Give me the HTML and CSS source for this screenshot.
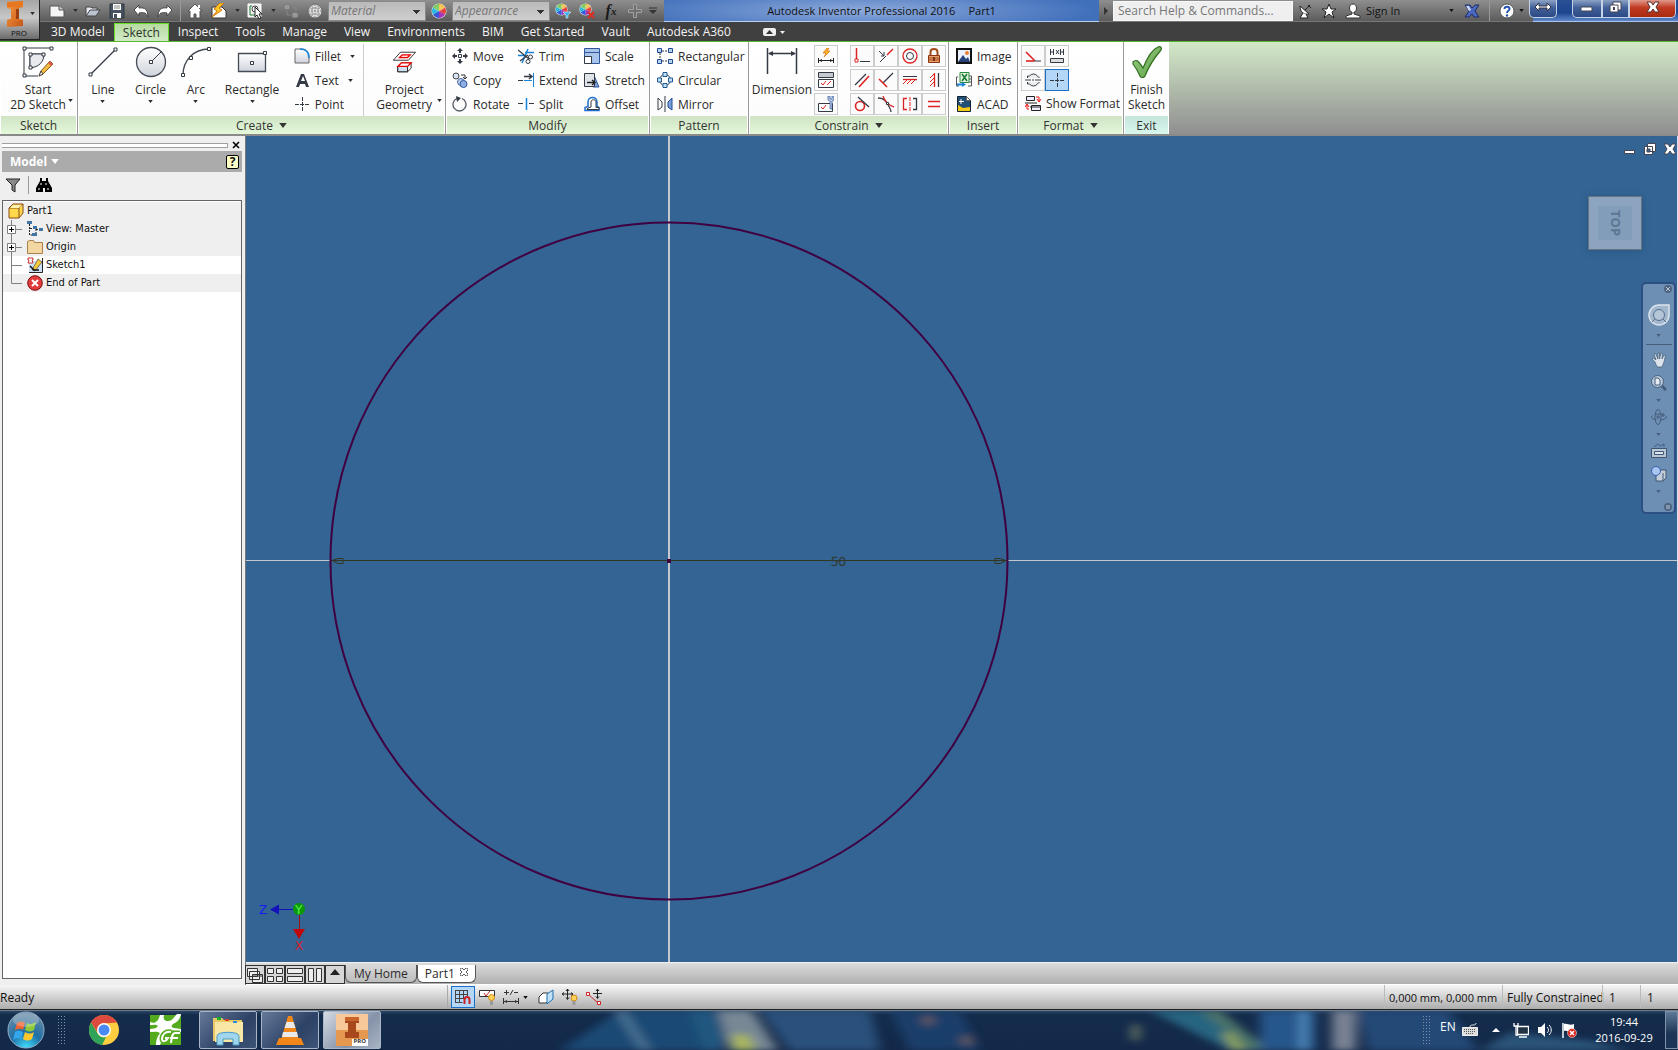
FILE: index.html
```html
<!DOCTYPE html>
<html lang="en">
<head>
<meta charset="utf-8">
<title>Autodesk Inventor Professional 2016 - Part1</title>
<link rel="stylesheet" href="styles.css">
</head>
<body>
<svg class="defs" aria-hidden="true">
  <defs>
    <linearGradient id="steel" x1="0" y1="0" x2="0" y2="1"><stop offset="0" stop-color="#fff"/><stop offset="1" stop-color="#cfd3dc"/></linearGradient>
    <linearGradient id="orange" x1="0" y1="0" x2="1" y2="1"><stop offset="0" stop-color="#f79a3c"/><stop offset="1" stop-color="#c4561a"/></linearGradient>
    <linearGradient id="green" x1="0" y1="0" x2="1" y2="1"><stop offset="0" stop-color="#9ccf86"/><stop offset="1" stop-color="#5c9e45"/></linearGradient>
    <radialGradient id="orb" cx=".5" cy="1" r="1"><stop offset="0" stop-color="#3fe0ff"/><stop offset=".45" stop-color="#1f6fa5"/><stop offset="1" stop-color="#6f8ba5"/></radialGradient>
    <symbol id="wheel" viewBox="0 0 16 16">
      <circle cx="8" cy="8" r="7.500" fill="#eee"/>
      <path d="M8 8V1A7 7 0 0 1 14 4.500z" fill="#f0b429"/><path d="M8 8l6-3.500A7 7 0 0 1 14 11.500z" fill="#e8413a"/>
      <path d="M8 8l6 3.500A7 7 0 0 1 8 15z" fill="#a535b8"/><path d="M8 8v7a7 7 0 0 1-6-3.500z" fill="#3458d8"/>
      <path d="M8 8l-6 3.500A7 7 0 0 1 2 4.500z" fill="#2fb6e0"/><path d="M8 8L2 4.500A7 7 0 0 1 8 1z" fill="#5cbf3a"/>
      <ellipse cx="8" cy="5" rx="5" ry="3" fill="#fff" opacity=".25"/>
    </symbol>
    <symbol id="caret" viewBox="0 0 6 4"><path d="M0 0h6L3 4z" fill="currentColor"/></symbol>
  </defs>
</svg>

<header class="top">
  <button class="app" aria-label="Application menu">
    <svg class="app-logo" viewBox="0 0 18 26"><path d="M1 1l16-1v6l-4 1v11l4 1v6L1 26v-7l4-1V8L1 7z" fill="url(#orange)"/><path d="M1 1l16-1v6H1zM1 19l4-1h8l4 1H1z" fill="#e87722"/><path d="M10 8h3v10h-3z" fill="#9c3f10"/></svg>
    <svg class="caret"><use href="#caret"/></svg>
    <span class="app-pro">PRO</span>
  </button>
  <div class="titlebar">
    <div class="qat">
      <button class="q" aria-label="New"><svg class="i16" viewBox="0 0 16 16"><path d="M1 3h9l5 4v7H1z" fill="#f4f4f4" stroke="#555"/><path d="M10 3v4h5" fill="#ccc" stroke="#555"/></svg></button>
      <button class="q drop" aria-label="New options"><svg class="caret"><use href="#caret"/></svg></button>
      <button class="q" aria-label="Open"><svg class="i16" viewBox="0 0 16 16"><path d="M1 13V4h5l1 1h5v3" fill="#e8ecf1" stroke="#444"/><path d="M1 13l4-6h10l-4 6z" fill="#b9c4d0" stroke="#444"/></svg></button>
      <button class="q" aria-label="Save"><svg class="i16" viewBox="0 0 16 16"><path d="M1 1h14v14H1z" fill="#46525f" stroke="#2d3640"/><path d="M4 1h8v6H4zM4 10h8v5H4z" fill="#fff"/><path d="M5 3h6M5 5h6" stroke="#888"/><path d="M5 11h3v4H5z" fill="#46525f"/></svg></button>
      <button class="q" aria-label="Undo"><svg class="i16" viewBox="0 0 16 16"><path d="M1 7l5-5v3c6-1 9 2 9 9-1-4-4-5-9-4v3z" fill="#fff" stroke="#444"/></svg></button>
      <button class="q" aria-label="Redo"><svg class="i16" viewBox="0 0 16 16"><path d="M15 7l-5-5v3c-6-1-9 2-9 9 1-4 4-5 9-4v3z" fill="#fff" stroke="#444"/></svg></button>
      <span class="q-sep"></span>
      <button class="q" aria-label="Home"><svg class="i16" viewBox="0 0 16 16"><path d="M8 1l7 7h-2v7H9v-4H7v4H3V8H1z" fill="#fff" stroke="#555"/><path d="M12 2v3" stroke="#fff" stroke-width="2"/></svg></button>
      <button class="q" aria-label="Local update"><svg class="i16" viewBox="0 0 16 16"><path d="M1 4h10l4 4v7H1z" fill="#fff" stroke="#333"/><path d="M9 0L3 6l3 2-5 6 10-7-3-2 5-5z" fill="#ffc928" stroke="#d3740c"/></svg></button>
      <button class="q drop" aria-label="Update options"><svg class="caret"><use href="#caret"/></svg></button>
      <button class="q" aria-label="Select"><svg class="i16" viewBox="0 0 16 16"><path d="M1 1h13v13H1z" fill="#eee" stroke="#fff"/><path d="M3 3v9h6M3 3h2" fill="none" stroke="#1d7a2f"/><circle cx="8" cy="6" r="3" fill="#fff" stroke="#444"/><path d="M8 4l7 7h-3l2 4-2 1-2-4-2 2z" fill="#fff" stroke="#222"/></svg></button>
      <button class="q drop" aria-label="Select options"><svg class="caret"><use href="#caret"/></svg></button>
      <button class="q" aria-label="Return"><svg class="i16" viewBox="0 0 16 16"><path d="M1 2l3-1 3 1v4L4 7 1 6zM9 10l3-1 3 1v4l-3 1-3-1z" fill="#999" stroke="#777"/><path d="M4 8v4h4M10 5h3v3" fill="none" stroke="#888"/></svg></button>
      <button class="q" aria-label="Material browser"><svg class="i16" viewBox="0 0 16 16"><circle cx="8" cy="8" r="7" fill="#ddd" stroke="#666"/><path d="M2 5h12M1 8h14M2 11h12M5 2v12M8 1v14M11 2v12" stroke="#888" stroke-dasharray="2 1"/></svg></button>
      <select class="picker" aria-label="Material"><option>Material</option></select>
      <button class="q" aria-label="Appearance browser"><svg class="i16"><use href="#wheel"/></svg></button>
      <select class="picker" aria-label="Appearance"><option>Appearance</option></select>
      <button class="q" aria-label="Adjust appearance"><svg class="i16" viewBox="0 0 16 16"><use href="#wheel" width="13" height="13"/><path d="M8 9h8l-3 3v3h-2v-3z" fill="#35b3ec" stroke="#fff" stroke-width=".5"/></svg></button>
      <button class="q" aria-label="Clear appearance"><svg class="i16" viewBox="0 0 16 16"><use href="#wheel" width="13" height="13"/><path d="M9 9l6 6M15 9l-6 6" stroke="#e02b20" stroke-width="2"/></svg></button>
      <button class="q fx" aria-label="Parameters">f<sub>x</sub></button>
      <button class="q" aria-label="Add"><svg class="i16" viewBox="0 0 16 16"><path d="M6.500 1.500h3v5h5v3h-5v5h-3v-5h-5v-3h5z" fill="#6f6f6f" stroke="#a0a0a0"/></svg></button>
      <button class="q drop" aria-label="Customize"><svg class="i8" viewBox="0 0 8 8"><path d="M0 1h8" stroke="#333"/><path d="M0 3h8L4 7z" fill="#333"/></svg></button>
    </div>
    <div class="caption"><span>Autodesk Inventor Professional 2016</span><span>Part1</span></div>
    <div class="info">
      <button class="expand" aria-label="Toggle search"><svg viewBox="0 0 4 8"><path d="M0 0l4 4-4 4z" fill="#333"/></svg></button>
      <input class="search" type="text" aria-label="Search" placeholder="Search Help &amp; Commands...">
      <button class="q" aria-label="Communication center"><svg class="i16" viewBox="0 0 16 16"><path d="M3 3c0 6 4 9 9 8z" fill="#fff" stroke="#222"/><path d="M8 7l5-5M11 2l3 3M6 10l-3 5h8l-2-4" fill="#fff" stroke="#222"/></svg></button>
      <button class="q" aria-label="Favorites"><svg class="i16" viewBox="0 0 16 16"><path d="M8 1l2 5h5l-4 3 2 6-5-4-5 4 2-6-4-3h5z" fill="#fff" stroke="#222"/></svg></button>
      <button class="q sign"><svg class="i16" viewBox="0 0 16 16"><path d="M8 1c5 0 4 8 1 8v2l6 2v2H1v-2l6-2V9C4 9 3 1 8 1z" fill="#fff" stroke="#333"/></svg><span>Sign In</span><svg class="caret"><use href="#caret"/></svg></button>
      <button class="q" aria-label="Exchange apps"><svg class="i16" viewBox="0 0 16 16"><path d="M1 2h5l2 3 3-3h4l-4 6 4 6h-5l-2-3-3 3H1l4-6z" fill="#4a68c0" stroke="#1c2c66"/><path d="M2 3h3l2 4-2 1z" fill="#cfd9f5"/></svg></button>
      <span class="q-sep"></span>
      <button class="q" aria-label="Help"><svg class="i16" viewBox="0 0 16 16"><circle cx="8" cy="8" r="7" fill="#fff" stroke="#555"/><path d="M5.500 6c0-3 5-3 5 0 0 2-2.500 1.500-2.500 4" fill="none" stroke="#2554b0" stroke-width="2"/><circle cx="8" cy="12.500" r="1.200" fill="#2554b0"/></svg></button>
      <svg class="caret"><use href="#caret"/></svg>
    </div>
    <div class="win">
      <button class="w span" aria-label="Move window"><svg viewBox="0 0 16 8"><path d="M0 4l4-4v3h8V0l4 4-4 4V5H4v3z" fill="#fff" stroke="#334"/></svg></button>
      <div class="w-group">
        <button class="w min" aria-label="Minimize"><svg viewBox="0 0 14 12"><path d="M1 6h11v4H1z" fill="#fff" stroke="#445"/></svg></button>
        <button class="w max" aria-label="Restore"><svg viewBox="0 0 14 12"><path d="M4 1h8v8H4z" fill="#fff" stroke="#445"/><path d="M1 4h8v7H1z" fill="#fff" stroke="#445"/><path d="M4 6h2v3H4z" fill="#445"/></svg></button>
        <button class="w close" aria-label="Close"><svg viewBox="0 0 14 12"><path d="M1 1h4l2 3 2-3h4L10 6l3 5H9L7 8l-2 3H1l3-5z" fill="#fff" stroke="#533"/></svg></button>
      </div>
    </div>
  </div>
  <nav class="tabs">
    <button>3D Model</button><button class="on">Sketch</button><button>Inspect</button><button>Tools</button><button>Manage</button><button>View</button><button>Environments</button><button>BIM</button><button>Get Started</button><button>Vault</button><button>Autodesk A360</button>
    <button class="fold" aria-label="Minimize ribbon"><svg viewBox="0 0 22 8"><rect width="13" height="8" rx="2" fill="#eee"/><path d="M3 6h7L6.500 2z" fill="#333"/><path d="M17 3h5l-2.500 3z" fill="#eee"/></svg></button>
  </nav>
</header>

<div class="ribbon">
  <section class="panel p-sketch">
    <div class="tools">
      <button class="big"><svg class="i32" viewBox="0 0 32 32"><path d="M2 30V2h28M2 30h14M8 8v14M8 8h14" fill="none" stroke="#333a44"/><path d="M8 8h14c0 8-5 13-14 14z" fill="#e8eaee" stroke="#333a44"/><path d="M1 1h3v3H1zM28 1h3v3h-3zM1 28h3v3H1zM7 7h3v3H7zM20 7h3v3h-3zM7 20h3v3H7z" fill="#fff" stroke="#333a44"/><path d="M17 30l2-5 9-10 3 3-10 10z" fill="#f3bc45" stroke="#8a5a17"/><path d="M17 30l2-5 2 3z" fill="#fff" stroke="#444"/><path d="M26 17l2-2 3 3-2 2z" fill="#d85c4a"/></svg><span>Start<br>2D Sketch</span><svg class="caret side"><use href="#caret"/></svg></button>
    </div>
    <h2>Sketch</h2>
  </section>

  <section class="panel p-create">
    <div class="tools">
      <button class="big"><svg class="i32" viewBox="0 0 32 32"><path d="M4 28L28 4" stroke="#333a44" stroke-width="1.300"/><path d="M2 27h3v3H2zM27 2h3v3h-3z" fill="#fff" stroke="#333a44"/></svg><span>Line</span><svg class="caret"><use href="#caret"/></svg></button>
      <button class="big"><svg class="i32" viewBox="0 0 32 32"><circle cx="16" cy="16" r="14.500" fill="url(#steel)" stroke="#444b55" stroke-width="1.300"/><path d="M16 16L27 5" stroke="#333a44"/><path d="M14.500 14.500h3v3h-3z" fill="#fff" stroke="#333a44"/></svg><span>Circle</span><svg class="caret"><use href="#caret"/></svg></button>
      <button class="big narrow"><svg class="i32" viewBox="0 0 32 32"><path d="M3 29C3 15 13 3 29 3" fill="none" stroke="#444b55" stroke-width="1.300"/><path d="M1.500 27.500h3v3h-3zM9.500 10.500h3v3h-3zM27.500 1.500h3v3h-3z" fill="#fff" stroke="#333a44"/></svg><span>Arc</span><svg class="caret"><use href="#caret"/></svg></button>
      <button class="big wide"><svg class="i32" viewBox="0 0 32 32"><path d="M2.500 7.500h27v18h-27z" fill="url(#steel)" stroke="#444b55" stroke-width="1.300"/><path d="M14.500 15.500h3v3h-3zM27.500 5.500h3v3h-3z" fill="#fff" stroke="#333a44"/></svg><span>Rectangle</span><svg class="caret"><use href="#caret"/></svg></button>
      <div class="col c-fillet">
        <button class="row"><svg class="i16" viewBox="0 0 16 16"><path d="M1 1h6c5 0 8 3 8 8v6H1z" fill="url(#steel)" stroke="#666"/><path d="M6 1c6 0 9 3 9 9" fill="none" stroke="#1583d8" stroke-width="1.500"/></svg><span>Fillet</span><svg class="caret"><use href="#caret"/></svg></button>
        <button class="row"><svg class="i16" viewBox="0 0 16 16"><path d="M2 15L7 2h3l5 13h-3l-1-3H6l-1 3zM7 9h4L9 4z" fill="#333a44" fill-rule="evenodd"/></svg><span>Text</span><svg class="caret"><use href="#caret"/></svg></button>
        <button class="row"><svg class="i16" viewBox="0 0 16 16"><path d="M1 8.500h4M6 8.500h4M11 8.500h4M8.500 1v4M8.500 6v4M8.500 11v4" stroke="#333a44"/></svg><span>Point</span></button>
      </div>
      <button class="big project"><svg class="i32" viewBox="-2 0 36 36"><path d="M4 16L12 7h17l-8 9z" fill="#fff" stroke="#222"/><path d="M11 13l3-3h9l-3 3z" fill="#fdd" stroke="#e00" stroke-width="1.500"/><path d="M9 23l4-4h11v6l-4 4H9z" fill="#fff" stroke="#111"/><path d="M9 23h11v6H9z" fill="#cfe0f5" stroke="#111"/><path d="M9 23l4-4h11l-4 4z" fill="#fff" stroke="#e00" stroke-width="1.500"/></svg><span>Project<br>Geometry</span><svg class="caret side"><use href="#caret"/></svg></button>
    </div>
    <h2>Create <svg class="caret"><use href="#caret"/></svg></h2>
  </section>

  <section class="panel p-modify">
    <div class="tools">
      <div class="col c-move">
        <button class="row"><svg class="i16" viewBox="0 0 16 16"><path d="M8 0l3 3H9v2H7V3H5zM8 16l-3-3h2v-2h2v2h2zM0 8l3-3v2h2v2H3v2zM16 8l-3 3V9h-2V7h2V5z" fill="#333a44"/><path d="M6.500 6.500h3v3h-3z" fill="#fff" stroke="#333a44"/></svg><span>Move</span></button>
        <button class="row"><svg class="i16" viewBox="0 0 16 16"><circle cx="4" cy="4" r="3" fill="#d8e4f4" stroke="#444"/><circle cx="9" cy="10" r="3.500" fill="#b9cdec" stroke="#4a6ba5"/><circle cx="11.500" cy="12" r="3.500" fill="#8fb0e2" stroke="#31579a"/><path d="M9 3h4v4M11 5l2 2 2-2" fill="none" stroke="#333"/></svg><span>Copy</span></button>
        <button class="row"><svg class="i16" viewBox="0 0 16 16"><path d="M10 2.500a6.500 6.500 0 1 1-5 0" fill="none" stroke="#555c66" stroke-width="1.300"/><path d="M4 0l5 2-4 4z" fill="#333a44"/></svg><span>Rotate</span></button>
      </div>
      <div class="col c-trim">
        <button class="row"><svg class="i16" viewBox="0 0 16 16"><path d="M0 7.500h6M4 15l6-14" stroke="#1583d8" stroke-width="1.500"/><path d="M7 4.500h9" stroke="#1583d8" stroke-width="1.500"/><path d="M0 2l11 9M2 13L10 7" stroke="#333a44" stroke-width="1.300"/><circle cx="12.500" cy="9" r="2" fill="none" stroke="#333a44"/><circle cx="10" cy="13.500" r="2" fill="none" stroke="#333a44"/></svg><span>Trim</span></button>
        <button class="row"><svg class="i16" viewBox="0 0 16 16"><path d="M0 8.500h5" stroke="#333a44"/><path d="M6 8.500h8M15.500 1v14" stroke="#1583d8"/><path d="M6 4.500h7M11 2l3 2.500L11 7" fill="none" stroke="#333a44" stroke-width="1.500"/></svg><span>Extend</span></button>
        <button class="row"><svg class="i16" viewBox="0 0 16 16"><path d="M0 7.500h5M11 7.500h5" stroke="#333a44"/><path d="M8.500 2v12" stroke="#1583d8" stroke-width="1.500"/></svg><span>Split</span></button>
      </div>
      <div class="col c-scale">
        <button class="row"><svg class="i16" viewBox="0 0 16 16"><path d="M.5.5h15v15H.5z" fill="#a9c4ea" stroke="#31579a"/><path d="M.5 4.500h15" stroke="#31579a"/><path d="M.5 8.500h7v7h-7z" fill="#fff" stroke="#333a44"/></svg><span>Scale</span></button>
        <button class="row"><svg class="i16" viewBox="0 0 16 16"><path d="M9 1l6 14H9z" fill="#7ba0da" stroke="#31579a"/><path d="M.5 1.500h10v13H.5z" fill="#dfe3ea" stroke="#333a44"/><path d="M3 10.500h7M8 8l3 2.500L8 13" fill="none" stroke="#222" stroke-width="1.500"/></svg><span>Stretch</span></button>
        <button class="row"><svg class="i16" viewBox="0 0 16 16"><path d="M1 14.500v-3l3-1V6c0-6 9-6 9 0v4l2 1.500v3z" fill="none" stroke="#1f6fd0" stroke-width="1.500"/><path d="M3 13.500h12v-2h-3V6c0-3-5-3-5 0v5l-3 1z" fill="#fff" stroke="#333a44"/></svg><span>Offset</span></button>
      </div>
    </div>
    <h2>Modify</h2>
  </section>

  <section class="panel p-pattern">
    <div class="tools">
      <div class="col">
        <button class="row"><svg class="i16" viewBox="0 0 16 16"><path d="M5 3h7M5 13h7M3 5v7" stroke="#333a44" stroke-dasharray="2 1"/><path d="M.5.5h4v4h-4zM11.500.5h4v4h-4zM.5 11.500h4v4h-4zM11.500 11.500h4v4h-4z" fill="#bcd2f2" stroke="#1f4a94"/></svg><span>Rectangular</span></button>
        <button class="row"><svg class="i16" viewBox="0 0 16 16"><circle cx="8" cy="8" r="5.500" fill="none" stroke="#333a44"/><path d="M6 .5h4v4H6zM.5 6h4v4h-4zM11.500 6h4v4h-4zM6 11.500h4v4H6z" fill="#bfe0f7" stroke="#1f5a94"/></svg><span>Circular</span></button>
        <button class="row"><svg class="i16" viewBox="0 0 16 16"><path d="M1 2l4 4v5l-4 3z" fill="#fff" stroke="#333a44"/><path d="M15 2l-4 4v5l4 3z" fill="#7ba0da" stroke="#1f4a94"/><path d="M8 0v16" stroke="#333a44"/></svg><span>Mirror</span></button>
      </div>
    </div>
    <h2>Pattern</h2>
  </section>

  <section class="panel p-constrain">
    <div class="tools">
      <button class="big dim"><svg class="i32" viewBox="0 0 32 32"><path d="M1.500 2v26M30.500 2v26M3 7.500h26" stroke="#333a44" stroke-width="1.500"/><path d="M2 7.500l5-2.500v5zM30 7.500l-5-2.500v5z" fill="#333a44"/></svg><span>Dimension</span></button>
      <div class="grid one">
        <button aria-label="Automatic dimensions"><svg class="i16" viewBox="0 0 16 16"><path d="M9 0L5 5h3l-2 4 6-6H9l2-3z" fill="#ffb12a" stroke="#d3740c" stroke-width=".7"/><path d="M.5 10v5M15.500 10v5M1 12.500h14" stroke="#222"/><path d="M1 12.500L4 11v3zM15 12.500L12 11v3z" fill="#222"/></svg></button>
        <button aria-label="Show constraints"><svg class="i16" viewBox="0 0 16 16"><path d="M.5.5h15v5H.5z" fill="#c5c9d1" stroke="#333a44"/><path d="M.5 7.500h15v8H.5z" fill="#fff" stroke="#333a44"/><path d="M3 11l2 2 3-4M9 13l4-4" stroke="#d22" fill="none"/></svg></button>
        <button aria-label="Constraint settings"><svg class="i16" viewBox="0 0 16 16"><path d="M.5 7.500h14v8H.5z" fill="#fff" stroke="#333a44"/><path d="M3 11l2 2 3-4" stroke="#d22" fill="none"/><path d="M10 0v4l2 1v8h2V5l2-1V0h-2v3h-2V0z" fill="#bfd0ea" stroke="#31579a" stroke-width=".7"/></svg></button>
      </div>
      <div class="grid four">
        <button aria-label="Coincident"><svg class="i16" viewBox="0 0 16 16"><path d="M2.500 0v11" stroke="#d22" stroke-width="1.500"/><path d="M1 11h3v3H1z" fill="#fff" stroke="#d22"/><path d="M6 13.500h10" stroke="#333a44"/></svg></button>
        <button aria-label="Collinear"><svg class="i16" viewBox="0 0 16 16"><path d="M15 1L9 7" stroke="#d22" stroke-width="1.500"/><path d="M8 8l-6 6M1 3l5 5M6 4v4H3" fill="none" stroke="#333a44"/></svg></button>
        <button aria-label="Concentric"><svg class="i16" viewBox="0 0 16 16"><circle cx="8" cy="8" r="7" fill="none" stroke="#d22" stroke-width="1.300"/><circle cx="8" cy="8" r="3.500" fill="none" stroke="#333a44"/></svg></button>
        <button aria-label="Fix"><svg class="i16" viewBox="0 0 16 16"><path d="M4.500 7V4c0-4 7-4 7 0v3" fill="none" stroke="#a34a1a" stroke-width="2"/><path d="M2.500 7.500h11v7h-11z" fill="#e8a070" stroke="#8c3510"/><path d="M3 10h10M3 12h10" stroke="#a34a1a"/><path d="M8 9v4" stroke="#5a1d05" stroke-width="1.500"/></svg></button>
        <button aria-label="Parallel"><svg class="i16" viewBox="0 0 16 16"><path d="M1 13L12 2" stroke="#333a44" stroke-width="1.300"/><path d="M5 15L15 4" stroke="#d22" stroke-width="1.600"/></svg></button>
        <button aria-label="Perpendicular"><svg class="i16" viewBox="0 0 16 16"><path d="M15 1L5 11" stroke="#333a44" stroke-width="1.300"/><path d="M1 7l8 8" stroke="#d22" stroke-width="1.600"/></svg></button>
        <button aria-label="Horizontal"><svg class="i16" viewBox="0 0 16 16"><path d="M1 4.500h14" stroke="#333a44"/><path d="M1 7.500h14" stroke="#d22" stroke-width="1.300"/><path d="M1 12l4-4M5 12l4-4M9 12l4-4" stroke="#d22"/></svg></button>
        <button aria-label="Vertical"><svg class="i16" viewBox="0 0 16 16"><path d="M8.500 1v14" stroke="#d22" stroke-width="1.300"/><path d="M12.500 1v14" stroke="#333a44" stroke-width="1.300"/><path d="M4 6l4-4M4 10l4-4M4 14l4-4" stroke="#d22"/></svg></button>
        <button aria-label="Tangent"><svg class="i16" viewBox="0 0 16 16"><circle cx="6" cy="10" r="4.500" fill="none" stroke="#d22" stroke-width="1.600"/><path d="M4 1l11 10" stroke="#333a44" stroke-width="1.300"/></svg></button>
        <button aria-label="Smooth"><svg class="i16" viewBox="0 0 16 16"><path d="M0 2c5 0 8 2 9 6M10 9c2 3 3 5 3 7" fill="none" stroke="#333a44" stroke-width="1.300"/><path d="M5 0c2 6 5 9 11 11" fill="none" stroke="#d22" stroke-width="1.300"/><path d="M8.500 6.500h2v2h-2z" fill="#fff" stroke="#333a44"/></svg></button>
        <button aria-label="Symmetric"><svg class="i16" viewBox="0 0 16 16"><path d="M5 2.500H1.500v11H5" fill="none" stroke="#d22" stroke-width="1.300"/><path d="M11 2.500h3.500v11H11" fill="none" stroke="#333a44" stroke-width="1.300"/><path d="M8 1v4M8 6v4M8 11v4" stroke="#d22"/></svg></button>
        <button aria-label="Equal"><svg class="i16" viewBox="0 0 16 16"><path d="M2 5.500h12M2 10.500h12" stroke="#d22" stroke-width="1.600"/></svg></button>
      </div>
    </div>
    <h2>Constrain <svg class="caret"><use href="#caret"/></svg></h2>
  </section>

  <section class="panel p-insert">
    <div class="tools">
      <div class="col">
        <button class="row"><svg class="i16" viewBox="0 0 16 16"><path d="M1 1h14v14H1z" fill="#eaf2ff" stroke="#111" stroke-width="2"/><path d="M2 14l5-7 3 4 2-2 2 5z" fill="#27407a"/><circle cx="11" cy="5" r="2" fill="#f08030"/></svg><span>Image</span></button>
        <button class="row"><svg class="i16" viewBox="0 0 16 16"><path d="M2 5H.5v9H3M13 4h2.500v10H12M13 7h2M13 10h2" fill="none" stroke="#555"/><path d="M4 .5h9v10H4z" fill="#e2f3e2" stroke="#2b8a3e"/><path d="M6 2l5 7M11 2L6 9" stroke="#1e7a32" stroke-width="1.600"/><path d="M1 12.500h6" stroke="#1583d8" stroke-width="2"/><path d="M6 10l4 2.500L6 15z" fill="#1583d8"/></svg><span>Points</span></button>
        <button class="row"><svg class="i16" viewBox="0 0 16 16"><path d="M1.500.5h9l4 4v11h-13z" fill="#1f4f74" stroke="#123"/><path d="M2 9l5 3 7-1v4H2z" fill="#f6c818"/><path d="M5 3v5M3 5.500h5" stroke="#fff"/><path d="M10.500.5v4h4z" fill="#fff" stroke="#666"/></svg><span>ACAD</span></button>
      </div>
    </div>
    <h2>Insert</h2>
  </section>

  <section class="panel p-format">
    <div class="tools stack">
      <div class="grid two">
        <button aria-label="Construction"><svg class="i16" viewBox="0 0 16 16"><path d="M1 4l9 9" stroke="#d22" stroke-width="1.600"/><path d="M1 13h8" stroke="#d22" stroke-width="1.600"/><path d="M9 13h7" stroke="#333a44"/></svg></button>
        <button aria-label="Driven dimension"><svg class="i16" viewBox="0 0 16 16"><path d="M1.500 1v6M1.500 4h3M4.500 1v6M11.500 1v6M11.500 4h3M14.500 1v6M7 2l3 4M10 2L7 6" stroke="#333a44"/><path d="M1.500 10.500h13v4h-13z" fill="#ddd" stroke="#333a44"/></svg></button>
        <button aria-label="Centerline"><svg class="i16" viewBox="0 0 16 16"><path d="M2.500 6V4h2a5 5 0 0 1 8 0l2 2M2.500 10v2h2a5 5 0 0 0 8 0l2-2" fill="#eee" stroke="#333a44"/><path d="M0 8h6M7 8h2M10 8h6" stroke="#333a44"/></svg></button>
        <button class="sel" aria-label="Center point" aria-pressed="true"><svg class="i16" viewBox="0 0 16 16"><path d="M1 8.500h4M6 8.500h4M11 8.500h4M8.500 1v4M8.500 6v4M8.500 11v4" stroke="#333a44"/></svg></button>
      </div>
      <button class="row"><svg class="i16" viewBox="0 0 16 16"><path d="M1.500 1.500h8v4h-8zM6.500 10.500h9v5h-9z" fill="#eef" stroke="#222"/><path d="M0 8h12M5 12h11" stroke="#222"/><path d="M11 2h3v4M12 4l2 3 2-3M4 14H2v-4M0 12l2-3 2 3" fill="none" stroke="#e11"/></svg><span>Show Format</span></button>
    </div>
    <h2>Format <svg class="caret"><use href="#caret"/></svg></h2>
  </section>

  <section class="panel p-exit">
    <div class="tools">
      <button class="big"><svg class="i32" viewBox="0 0 32 32"><path d="M2 16c3-3 5-2 10 6C16 12 20 4 27 1c3-1 4 1 3 3-6 7-12 16-16 26-1 2-4 2-5 0C7 25 5 22 2 18z" fill="url(#green)" stroke="#2f6e1f" stroke-width="1.200"/></svg><span>Finish<br>Sketch</span></button>
    </div>
    <h2>Exit</h2>
  </section>
</div>

<main class="work">
  <aside class="browser">
    <div class="grip"><span></span><button aria-label="Close panel"><svg class="i8" viewBox="0 0 8 8"><path d="M1 1l6 6M7 1L1 7" stroke="#000" stroke-width="1.600"/></svg></button></div>
    <div class="browser-head"><button class="model">Model <svg class="caret"><use href="#caret"/></svg></button><button class="help" aria-label="Browser help">?</button></div>
    <div class="browser-tools">
      <button aria-label="Filter"><svg class="i16" viewBox="0 0 16 16"><path d="M1 2h14L10 8v7l-3-2V8z" fill="#888" stroke="#222"/></svg></button>
      <span></span>
      <button aria-label="Find"><svg class="i16" viewBox="0 0 16 16"><path d="M4 1h2v3h4V1h2v3l4 7v4H9v-4H7v4H0v-4l4-7z" fill="#000"/><path d="M3 11v2M12 11v2M5 6v2M10 6v2" stroke="#fff"/></svg></button>
    </div>
    <ul class="tree">
      <li class="root"><svg class="i16" viewBox="0 0 16 16"><path d="M1 5l4-4h10v9l-4 5H1z" fill="#ffd84d" stroke="#8a4b12"/><path d="M1 5h10v10M11 5l4-4" fill="none" stroke="#8a4b12"/><path d="M2 5l3-3h9l-3 3z" fill="#fff2b0"/></svg><span>Part1</span></li>
      <li><svg class="twig" viewBox="0 0 18 18"><path d="M5.500 0v18M9 9.500h7" stroke="#808080"/><path d="M1.500 5.500h8v8h-8z" fill="#fff" stroke="#808080"/><path d="M3 9.500h5M5.500 7v5" stroke="#000"/></svg><svg class="i16" viewBox="0 0 16 16"><path d="M2.500 3v11H6M3 7.500h4M9 8.500h5M9 8v5" fill="none" stroke="#222" stroke-dasharray="2 1"/><path d="M0 0h5v3H0zM6 5h4v3H6zM12 7h4v3h-4zM5 12h5v3H5z" fill="#3f75a8"/></svg><span>View: Master</span></li>
      <li><svg class="twig" viewBox="0 0 18 18"><path d="M5.500 0v18M9 9.500h7" stroke="#808080"/><path d="M1.500 5.500h8v8h-8z" fill="#fff" stroke="#808080"/><path d="M3 9.500h5M5.500 7v5" stroke="#000"/></svg><svg class="i16" viewBox="0 0 16 16"><path d="M.5 14.500v-12l2-1h4l1 2h8v11z" fill="#f2d7a2" stroke="#a8824a"/></svg><span>Origin</span></li>
      <li class="active"><svg class="twig" viewBox="0 0 18 18"><path d="M5.500 0v18M5 9.500h11" stroke="#808080"/></svg><svg class="i16" viewBox="0 0 16 16"><path d="M2 4h13.500v11.500H2z" fill="#cde3f5"/><path d="M15.500 1v14.500H2" fill="none" stroke="#222"/><path d="M5 13l6-11 4 3-7 9z" fill="#f5c838" stroke="#444" stroke-width=".7"/><path d="M3 9l4 4h5" fill="none" stroke="#111" stroke-width="1.500"/><path d="M1 1h5v2H5l1 3H1l1-3H1z" fill="#fff" stroke="#c33"/></svg><span>Sketch1</span></li>
      <li><svg class="twig" viewBox="0 0 18 18"><path d="M5.500 0v9.500H16" fill="none" stroke="#808080"/></svg><svg class="i16" viewBox="0 0 16 16"><circle cx="8" cy="8" r="7.300" fill="#e33a3a" stroke="#7a1010"/><path d="M5 5l6 6M11 5l-6 6" stroke="#fff" stroke-width="2"/></svg><span>End of Part</span></li>
    </ul>
  </aside>

  <div class="docs">
    <div class="stage">
      <svg class="drawing" viewBox="0 -1 1431 826" preserveAspectRatio="xMinYMin meet">
        <path d="M423 -2000V4000" stroke="#c4c8cc" stroke-width="2"/>
        <path d="M-2000 423.500H84M762 423.500H6000" stroke="#c4c8cc"/>
        <path d="M84 423.500H762" stroke="#33361f"/>
        <circle cx="423" cy="424" r="338.500" fill="none" stroke="#400040" stroke-width="2"/>
        <path d="M86 423.500l6-2h5v5h-5zM760 423.500l-6-2h-5v5h5z" fill="none" stroke="#33361f"/>
        <rect x="421" y="422" width="4" height="4" fill="#400040"/>
        <text x="585" y="429" class="dimtext">50</text>
        <path d="M33 772.500H47" stroke="#1212b8"/><path d="M24 772.500l9-5v10z" fill="#1212b8"/>
        <path d="M53.500 778V792" stroke="#a01010"/><path d="M47 792h12l-6 10z" fill="#c00808"/>
        <circle cx="53" cy="772" r="6" fill="#0a9a0a"/>
        <text x="13" y="777" class="axis z">Z</text><text x="49" y="777" class="axis y">Y</text><text x="49" y="813" class="axis x">X</text>
      </svg>
      <div class="mdi">
        <button aria-label="Minimize document"><svg viewBox="0 0 14 14"><path d="M1.500 8.500h10v3h-10z" fill="#fff" stroke="#445"/></svg></button>
        <button aria-label="Restore document"><svg viewBox="0 0 14 14"><path d="M4.500 1.500h8v8h-8zM1.500 4.500h8v8h-8z" fill="#fff" stroke="#445"/><path d="M4 7h3v3H4z" fill="#336494" stroke="#445"/></svg></button>
        <button aria-label="Close document"><svg viewBox="0 0 14 14"><path d="M1 2h4l2 3 2-3h4l-3 5 3 5H9L7 9l-2 3H1l3-5z" fill="#fff" stroke="#445"/></svg></button>
      </div>
      <button class="cube"><span>TOP</span></button>
      <div class="navbar">
        <button class="nav-x" aria-label="Close navigation bar"><svg class="i8" viewBox="0 0 8 8"><circle cx="4" cy="4" r="4" fill="#4d6480"/><path d="M2 2l4 4M6 2L2 6" stroke="#b9c9da"/></svg></button>
        <button class="nav-wheel" aria-label="Steering wheel"><svg viewBox="0 0 22 22"><path d="M11 1h10v10a10 10 0 1 1-10-10z" fill="#a3b8ce" stroke="#dbe4ed" stroke-width="1.500"/><circle cx="11" cy="11" r="5.500" fill="#b4c6d8" stroke="#566e8c"/><path d="M7 15l-3 3M15 15l3 3" stroke="#566e8c"/></svg></button>
        <svg class="caret"><use href="#caret"/></svg>
        <hr>
        <button aria-label="Pan"><svg class="i16" viewBox="0 0 16 16"><path d="M4 10L1 7l1-1 3 2-2-6 1.500-.5L7 7V1h1.500v6L10 1l1.500.5L11 7l2-4 1.500.5L13 10l-2 5H6z" fill="#dde3ea" stroke="#4d6480" stroke-width=".8"/></svg></button>
        <button aria-label="Zoom"><svg class="i16" viewBox="0 0 16 16"><circle cx="6.500" cy="6.500" r="6" fill="#b9c9d9" stroke="#465e7c"/><path d="M4 3h3l2 2v5H4z" fill="#e5ebf1" stroke="#465e7c"/><path d="M11 11l4 4" stroke="#465e7c" stroke-width="3"/></svg></button>
        <svg class="caret"><use href="#caret"/></svg>
        <button aria-label="Orbit"><svg class="i16" viewBox="0 0 16 16"><ellipse cx="7" cy="8" rx="3" ry="7.500" fill="none" stroke="#465e7c"/><ellipse cx="8" cy="8" rx="7.500" ry="3" fill="none" stroke="#465e7c" stroke-dasharray="8 3"/><path d="M7 6v4M5 8h4M12 4v4M10 6h4" stroke="#465e7c"/></svg></button>
        <svg class="caret"><use href="#caret"/></svg>
        <button aria-label="Look at"><svg class="i16" viewBox="0 0 16 16"><path d="M3 4l4-3 2 2 4-2v3" fill="none" stroke="#465e7c"/><path d="M.5 5.500h15v9H.5z" fill="#b9c6d4" stroke="#3f5674"/><path d="M3.500 8.500h9v3h-9z" fill="#dde5ec" stroke="#3f5674"/></svg></button>
        <button aria-label="Visual style"><svg class="i16" viewBox="0 0 16 16"><path d="M5 7l3-3h7v8l-3 3H5z" fill="#c5cfda" stroke="#3f5674"/><path d="M12 7v8" stroke="#3f5674"/><circle cx="5" cy="5" r="4.500" fill="#a9c4ee" stroke="#3660b0"/></svg></button>
        <svg class="caret"><use href="#caret"/></svg>
        <button class="nav-x last" aria-label="Customize navigation bar"><svg class="i8" viewBox="0 0 8 8"><circle cx="4" cy="4" r="4" fill="#4d6480"/><path d="M2 3h4M2 5h4" stroke="#b9c9da"/></svg></button>
      </div>
    </div>
    <div class="doctabs">
      <button class="arr" aria-label="Cascade"><svg class="i16" viewBox="0 0 16 16"><path d="M.5 1.500h10v8H.5zM2.500 4.500h10v8h-10zM5.500 7.500h10v8h-10z" fill="#eee" stroke="#333"/><path d="M6 9h9" stroke="#333"/></svg></button>
      <button class="arr" aria-label="Tile"><svg class="i16" viewBox="0 0 16 16"><path d="M.5 1.500h6v5h-6zM9.500 1.500h6v5h-6zM.5 9.500h6v5h-6zM9.500 9.500h6v5h-6z" fill="#eee" stroke="#333"/></svg></button>
      <button class="arr" aria-label="Tile horizontally"><svg class="i16" viewBox="0 0 16 16"><path d="M.5 1.500h15v5H.5zM.5 9.500h15v5H.5z" fill="#eee" stroke="#333"/></svg></button>
      <button class="arr" aria-label="Tile vertically"><svg class="i16" viewBox="0 0 16 16"><path d="M1.500 1.500h5v13h-5zM9.500 1.500h5v13h-5z" fill="#eee" stroke="#333"/></svg></button>
      <button class="arr up" aria-label="Document list"><svg viewBox="0 0 10 6"><path d="M0 6h10L5 0z" fill="#222"/></svg></button>
      <button class="doc">My Home</button>
      <button class="doc on">Part1 <svg class="i8" viewBox="0 0 8 8"><path d="M0 0h2l2 2 2-2h2v2L6 4l2 2v2H6L4 6 2 8H0V6l2-2-2-2z" fill="#fff" stroke="#555"/></svg></button>
    </div>
  </div>
</main>

<footer class="status">
  <span class="ready">Ready</span>
  <div class="modes">
    <button class="sel" aria-label="Snap to grid" aria-pressed="true"><svg class="i16" viewBox="0 0 16 16"><path d="M.5 1.500h12M.5 5.500h12M.5 9.500h8M.5 13.500h7M.5 1v13M4.500 1v13M8.500 1v9M12.500 1v6" stroke="#444"/><path d="M9.500 15v-4c0-4 5-4 5 0v4" fill="none" stroke="#c22" stroke-width="2"/></svg></button>
    <button aria-label="Show constraints"><svg class="i16" viewBox="0 0 16 16"><path d="M.5 1.500h15v6H.5z" fill="#fff" stroke="#333"/><path d="M5 4l2 3 4-5" fill="none" stroke="#c22"/><circle cx="12.500" cy="8.500" r="3" fill="#ffd257" stroke="#d08a1a"/><path d="M11 12h3v4h-3z" fill="#999"/></svg></button>
    <button aria-label="Dimension display"><svg class="i16" viewBox="0 0 16 16"><path d="M1 3.500h5M3.500 1v5M7 6l3-5M11 3.500h4M.5 9v6M15.500 9v6M1 12.500h14" stroke="#333"/><path d="M1 12.500L4 11v3zM15 12.500L12 11v3z" fill="#333"/></svg></button>
    <svg class="caret"><use href="#caret"/></svg>
    <button aria-label="Slice graphics"><svg class="i16" viewBox="0 0 16 16"><path d="M1 8l4-4h5v8l-2 2H1z" fill="#fff" stroke="#333"/><path d="M9 5l6-4v9l-6 5z" fill="#bfe0f7" stroke="#1f6fb0"/></svg></button>
    <button aria-label="Show degrees of freedom"><svg class="i16" viewBox="0 0 16 16"><path d="M5.500 0v10M.5 5h10M4 2l1.500-2L7 2M4 8.500l1.500 2 1.500-2M2 3.500L0 5l2 1.500M9 3.500L11 5 9 6.500" fill="none" stroke="#222"/><circle cx="12" cy="9" r="3" fill="#ffd257" stroke="#d08a1a"/><path d="M10.500 12h3v4h-3z" fill="#999"/></svg></button>
    <button aria-label="Relax mode"><svg class="i16" viewBox="0 0 16 16"><path d="M2 5l10 9" stroke="#c22"/><path d="M.5 3.500h3v3h-3zM11.500 12.500h3v3h-3z" fill="#fff" stroke="#c22"/><path d="M11.500 0v9M7 4.500h9" stroke="#222"/><path d="M10 2l1.500-2L13 2M10 7.500l1.500 2 1.500-2" fill="none" stroke="#222"/></svg></button>
  </div>
  <span class="cell c-xy">0,000 mm, 0,000 mm</span>
  <span class="cell c-full">Fully Constrained</span>
  <span class="cell c-n">1</span>
  <span class="cell c-n">1</span>
</footer>

<div class="taskbar">
  <svg class="glow" viewBox="0 0 1678 40" preserveAspectRatio="xMidYMid slice" aria-hidden="true">
    <defs><filter id="soft" x="-20%" y="-50%" width="140%" height="200%"><feGaussianBlur stdDeviation="6 3"/></filter></defs>
    <g filter="url(#soft)" opacity=".85">
      <path d="M560 40L620 0H740L720 40z" fill="#1d4f7d"/>
      <path d="M616 0l8 0 26 40h-8z" fill="#5d89a8"/>
      <path d="M690 0h22l12 40h-20z" fill="#23608a"/>
      <path d="M718 0h34l26 40h-48z" fill="#8a99a2"/>
      <path d="M732 24h16l8 16h-22z" fill="#c3cf5f"/>
      <path d="M760 0h110l10 40h-90z" fill="#2e5885"/>
      <path d="M890 0h70l20 40h-70z" fill="#1d4370"/>
      <circle cx="928" cy="10" r="5" fill="#7a6660"/><circle cx="967" cy="30" r="5" fill="#7a6660"/>
      <path d="M1132 14h7v16h-7z" fill="#83906a"/>
      <path d="M1150 0h60l50 40h-30z" fill="#2a6f8a"/><path d="M1200 0h20l50 40h-20z" fill="#55806f"/>
      <path d="M1222 22h10l14 18h-14z" fill="#a3b860"/>
      <path d="M1260 0h55v40h-55z" fill="#2b5f98"/>
      <path d="M1300 0h8v40h-8z" fill="#5a9cd0"/>
      <path d="M1332 0h24v40h-24z" fill="#8b92a0"/>
      <path d="M1358 0h90l30 40h-110z" fill="#28507f"/>
      <path d="M1480 40l30-18 80 8 40 10z" fill="#2d5c80"/>
    </g>
  </svg>
  <button class="start" aria-label="Start"><svg viewBox="0 0 38 38"><circle cx="19" cy="19" r="18" fill="url(#orb)" stroke="#8fb0c8"/><path d="M10 12c3-2 5-2 8 0l-2 7c-3-2-5-1-8 0z" fill="#f0632d"/><path d="M20 12c3 2 5 1 9-1l-2 8c-3 2-6 2-9 0z" fill="#8fc93a"/><path d="M8 21c3-2 5-1 8 0l-2 7c-3-1-5-1-8 1z" fill="#35a5ea"/><path d="M18 21c3 2 6 2 9 0l-2 7c-3 2-6 2-9 0z" fill="#fcc62d"/><ellipse cx="19" cy="9" rx="13" ry="7" fill="#fff" opacity=".25"/></svg></button>
  <span class="dots"></span>
  <button class="pin" aria-label="Chrome"><svg viewBox="0 0 32 32"><circle cx="16" cy="16" r="15" fill="#ffcd40"/><path d="M3 8.500a15 15 0 0 1 26 0L16 9.500a7 7 0 0 0-6 10z" fill="#dd4b3e"/><path d="M3 8.500L10 20a7 7 0 0 0 8 3l-4 8A15 15 0 0 1 3 8.500z" fill="#2fa35a"/><circle cx="16" cy="16" r="7" fill="#fff"/><circle cx="16" cy="16" r="5.500" fill="#4a8af4"/></svg></button>
  <button class="pin" aria-label="CF"><svg viewBox="0 0 32 32"><path d="M0 1h31v30H0z" fill="#55ab1e"/><path d="M0 8c5 2 8 0 10-7h4c-1 4 0 6 5 6 4-1 5-4 8-7h4c-1 5-3 8-8 10-2 2-2 3 1 4l7 1v3l-10-2c-4 0-6 2-7 6l-4 9H6c0-6 2-9 4-12-3-2-7-1-10-1v-3c4 0 7-1 8-3-2-2-5-1-8-1z" fill="#fff"/><path d="M21 18c-6-1-9 3-9 7 0 3 4 3 6-1h-3M30 19h-5c-2 0-3 2-4 10M20 24h8" fill="none" stroke="#55ab1e" stroke-width="5"/><path d="M21 18c-6-1-9 3-9 7 0 3 4 3 6-1h-3M30 19h-5c-2 0-3 2-4 10M20 24h8" fill="none" stroke="#fff" stroke-width="2"/></svg></button>
  <button class="task" aria-label="Explorer"><svg viewBox="0 0 32 32"><path d="M1 4h9l2 2h18v21H1z" fill="#e8c765"/><path d="M3 8h28v20H3z" fill="#f9e8a5"/><path d="M5 3h4v3H5z" fill="#1fae2a"/><path d="M13 5h4v2h-4z" fill="#d8402e"/><path d="M21 7h4v2h-4z" fill="#2b8be0"/><path d="M5 31v-9c0-5 22-5 22 0v9h-6v-6h-10v6z" fill="#9fd6ee" stroke="#4a9cc5"/></svg></button>
  <button class="task" aria-label="VLC"><svg viewBox="0 0 32 32"><path d="M5 24h22l3 7H2z" fill="#f08519"/><path d="M14 2h4l7 24c-4 3-14 3-18 0z" fill="#f4871a"/><path d="M12.500 8h7l2 6h-11zM9 18h14l1 5H8z" fill="#e9e9e9"/></svg></button>
  <button class="task on"><svg viewBox="0 0 32 32"><path d="M0 0h32v32H0z" fill="#f6c89a"/><path d="M0 16h32v16H0z" fill="#e59850"/><path d="M9 3h14v6h-3v9h3v6H9v-6h3V9H9z" fill="#a8481c"/><path d="M9 3h14v4H9z" fill="#c9652b"/><path d="M16 25h16v7H16z" fill="#fff"/></svg><span>PRO</span></button>
  <div class="tray">
    <span class="dots"></span>
    <span class="lang">EN</span>
    <button aria-label="Keyboard"><svg class="i16" viewBox="0 0 16 16"><path d="M.5 5.500h15v8H.5z" fill="#ddd" stroke="#eee"/><path d="M2 7.500h12M2 9.500h12M4 11.500h8" stroke="#555" stroke-dasharray="1 1"/><path d="M8 5c0-4 6 0 6-4" fill="none" stroke="#ddd"/></svg></button>
    <button class="t-up" aria-label="Show hidden icons"><svg viewBox="0 0 8 4"><path d="M0 4h8L4 0z" fill="#fff"/></svg></button>
    <button aria-label="Network"><svg class="i16" viewBox="0 0 16 16"><path d="M4.500 4.500h11v8h-11z" fill="#234" stroke="#fff" stroke-width="1.300"/><path d="M6 15h8M1 1v3h4V1M3 4v9h2" fill="none" stroke="#fff" stroke-width="1.300"/></svg></button>
    <button aria-label="Volume"><svg class="i16" viewBox="0 0 16 16"><path d="M1 5h3l4-4v14l-4-4H1z" fill="#fff"/><path d="M10 5c2 2 2 4 0 6M12 3c3 3 3 7 0 10" fill="none" stroke="#fff"/></svg></button>
    <button aria-label="Action center"><svg class="i16" viewBox="0 0 16 16"><path d="M2 1v15" stroke="#fff" stroke-width="1.500"/><path d="M3 2c4-1 5 2 10 0v7c-5 2-6-1-10 0z" fill="#fff"/><circle cx="11" cy="11" r="4.500" fill="#d9281e" stroke="#fff" stroke-width=".5"/><path d="M9 9l4 4M13 9l-4 4" stroke="#fff" stroke-width="1.500"/></svg></button>
    <time class="clock">19:44<br>2016-09-29</time>
    <button class="peek" aria-label="Show desktop"></button>
  </div>
</div>
</body>
</html>
```
FILE: styles.css
```css
* { box-sizing: border-box; }
body {
  margin: 0;
  min-height: 100vh;
  display: flex;
  flex-direction: column;
  font: 12px/15px "Open Sans", "Noto Sans", sans-serif;
  color: #2b2b2b;
  background: #efefef;
}
button {
  margin: 0;
  padding: 0;
  border: 0;
  background: none;
  font: inherit;
  color: inherit;
}
svg { display: block; flex: none; }
.defs { position: absolute; width: 0; height: 0; }
.i8 { width: 8px; height: 8px; }
.i16 { width: 16px; height: 16px; }
.i32 { width: 32px; height: 32px; }
.caret { width: 5px; height: 3px; }

/* Title bar and ribbon tabs */
.top {
  display: grid;
  grid-template-columns: 40px 1fr;
  grid-template-rows: 22px 19px;
  background: #404040;
  border-bottom: 1px solid #59b52e;
}
.app {
  grid-row: 1 / 3;
  display: grid;
  grid-template-columns: 30px 6px;
  align-items: center;
  height: 40px;
  border: solid #222;
  border-width: 0 1px 1px 0;
  background: linear-gradient(#a5a5a5, #c8c8c8 45%, #6c6c6c);
}
.app-logo { width: 18px; height: 26px; justify-self: center; }
.app-pro { font-size: 8px; line-height: 10px; text-align: center; color: #111; padding-left: 8px; }
.titlebar { display: flex; background: linear-gradient(#3d6cb8, #3468b5); }
.qat, .info {
  display: flex;
  align-items: center;
  background: linear-gradient(#8f8f8f, #5b5b5b);
  border-bottom: 1px solid #777;
}
.qat { padding-left: 5px; flex: none; width: 624px; }
.q {
  display: flex;
  align-items: center;
  justify-content: center;
  width: 24px;
  height: 20px;
  flex: none;
}
.q.drop { width: 12px; }
.q-sep { width: 1px; height: 20px; background: #9a9a9a; margin: 0 2px 0 3px; }
.info .q-sep { margin: 0 5px; }
.fx { font: italic bold 16px/16px "Liberation Serif", serif; color: #1a1a1a; }
.fx sub { font-size: 11px; }
.picker {
  appearance: none;
  width: 98px;
  height: 20px;
  margin: 0 1px;
  padding: 0 0 0 2px;
  border: 1px solid #8a8a8a;
  border-radius: 0;
  background:
    linear-gradient(45deg, transparent 50%, #333 50%) right 8px top 8px / 4px 4px no-repeat,
    linear-gradient(-45deg, transparent 50%, #333 50%) right 4px top 8px / 4px 4px no-repeat,
    linear-gradient(#b9b9b9, #cfcfcf);
  color: #777;
  font: italic 12px/16px "Open Sans", sans-serif;
}
.caption {
  flex: 1;
  display: flex;
  justify-content: center;
  align-items: center;
  gap: 13px;
  color: #111;
  white-space: nowrap;
  font-size: 11px;
  border-bottom: 1px solid #b9d0f0;
  background: radial-gradient(ellipse 60% 120% at 45% 50%, #8daadb, #4170bb 90%);
}
.info { width: 434px; flex: none; color: #111; font-size: 11px; }
.expand { width: 14px; display: grid; place-items: center; }
.expand svg { width: 4px; height: 8px; }
.search {
  width: 180px;
  height: 20px;
  padding: 0 4px;
  border: 1px solid #f8f8f8;
  background: #efefef;
  font: inherit;
  font-size: 12px;
}
.search::placeholder { color: #777; opacity: 1; }
.sign { width: 119px; justify-content: flex-start; gap: 5px; padding: 0 6px 0 4px; }
.sign .caret { margin-left: auto; }
.win { display: flex; justify-content: space-between; align-items: flex-start; flex: none; width: 145px; padding-right: 2px; background: linear-gradient(#2a4f94, #1d458f 60%, #5e86c8); border-bottom: 1px solid #a9c4ee; }
.w-group { display: flex; }
.w {
  height: 18px;
  padding-bottom: 3px;
  display: grid;
  place-items: center;
  border: 1px solid #c4d2e8;
  border-top: 0;
  background: linear-gradient(#8ca2c4, #42619a 45%, #2b4a85);
}
.w svg { width: 14px; height: 12px; }
.span { width: 28px; margin-left: -4px; border-radius: 0 0 5px 5px; }
.span svg { width: 16px; height: 8px; }
.min { width: 30px; border-radius: 0 0 0 5px; }
.max { width: 27px; }
.close { width: 47px; border-radius: 0 0 5px 0; background: linear-gradient(#e09a8c, #c03a20 45%, #a82a12); }
.tabs { display: flex; align-items: flex-end; gap: 1px; padding-left: 3px; color: #f4f4f4; }
.tabs button { height: 19px; padding: 0 8px; white-space: nowrap; }
.tabs .on { height: 18px; color: #333; background: linear-gradient(#b6dba0, #d2ebc6); border: solid #66dd22; border-width: 1px 1px 0; }
.fold svg { width: 22px; height: 8px; }
.tabs .fold { margin-left: 15px; }

/* Ribbon */
.ribbon {
  display: flex;
  height: 94px;
  border-bottom: 2px solid #8a8a8a;
  background: linear-gradient(#d2e9c7, #8f8f8f);
}
.panel {
  display: flex;
  flex-direction: column;
  border-right: 1px solid #9a9a9a;
  background: #fff;
  padding: 0 1px;
  flex: none;
}
.tools { display: flex; flex: 1; padding-top: 2px; background: linear-gradient(#fff, #fcfcfc); }
.tools.stack { flex-direction: column; padding-left: 2px; }
.panel h2 {
  margin: 0;
  height: 18px;
  display: flex;
  align-items: center;
  justify-content: center;
  gap: 6px;
  font-size: 12px;
  font-weight: normal;
  color: #333;
  background: linear-gradient(#cfe4c4, #e4f8da);
}
.panel h2 .caret { width: 8px; height: 5px; }
.p-exit h2 { background: linear-gradient(#c5e4dc, #d8f8ee); }
.p-sketch { width: 78px; }
.p-create { width: 368px; }
.p-modify { width: 204px; }
.p-pattern { width: 99px; }
.p-constrain { width: 200px; }
.p-insert { width: 69px; }
.p-format { width: 106px; }
.p-exit { width: 45px; border-right: 0; }
.big {
  position: relative;
  display: flex;
  flex-direction: column;
  align-items: center;
  width: 48px;
  padding-top: 2px;
  gap: 4px;
}
.big .caret { margin-top: -1px; }
.big .side { position: absolute; right: 2px; bottom: 14px; }
.big.narrow { width: 43px; }
.big.wide { width: 70px; }
.p-sketch .big { width: 74px; }
.big.project { width: 81px; border-left: 1px solid #ccc; }
.p-exit .big { width: 43px; }
.big.dim { width: 64px; }
.col { display: flex; flex-direction: column; }
.row { height: 24px; display: flex; align-items: center; gap: 5px; white-space: nowrap; }
.row .caret { margin-left: 4px; }
.c-fillet { width: 77px; padding-left: 7px; }
.c-move { width: 71px; padding-left: 5px; }
.c-trim { width: 66px; }
.p-pattern .tools, .p-insert .tools { padding-left: 6px; }
.grid { display: grid; grid-auto-rows: 22px; row-gap: 2px; padding-top: 1px; }
.grid button { display: grid; place-items: center; border: 1px solid #ccc; background: #fbfbfb; }
.one { grid-template-columns: 24px; }
.four { grid-template-columns: repeat(4, 24px); margin-left: 12px; }
.two { grid-template-columns: repeat(2, 24px); }
.grid .sel, .status .sel { background: #b5d7f7; border: 1px solid #1c6fc9; }
.stack .row { padding-left: 4px; }

/* Model browser */
.work { flex: 1; display: grid; grid-template-columns: 246px 1fr; }
.browser { display: flex; flex-direction: column; padding: 3px 3px 6px 2px; border-right: 1px solid #777; }
.grip { display: flex; height: 12px; align-items: center; gap: 4px; }
.grip span { flex: 1; height: 5px; border: 1px solid #a0a0a0; border-left: 0; background: #fff; }
.grip button { padding-right: 2px; }
.browser-head { display: flex; align-items: center; height: 21px; padding: 0 3px 0 8px; background: #ababab; color: #fff; font-weight: bold; }
.model { display: flex; align-items: center; gap: 4px; }
.model .caret { width: 8px; height: 5px; }
.help { margin-left: auto; width: 13px; height: 14px; border: 1px solid #000; border-radius: 2px; background: #ffffc8; color: #111; line-height: 12px; font-weight: bold; }
.browser-tools { display: flex; align-items: center; gap: 7px; height: 28px; padding: 0 0 2px 3px; }
.browser-tools span { width: 1px; height: 18px; background: #999; }
.tree {
  flex: 1;
  margin: 0;
  padding: 1px 0 0;
  list-style: none;
  background: #fff;
  border: 1px solid #646464;
  font: 11px/18px "DejaVu Sans Condensed", sans-serif;
  color: #111;
}
.tree li { display: flex; align-items: center; gap: 3px; height: 18px; padding-left: 3px; background: #efefef; }
.tree .root { padding-left: 5px; }
.tree .active { background: #fff; }
.twig { width: 18px; height: 18px; }

/* Modelling view */
.docs { display: flex; flex-direction: column; min-width: 0; }
.stage { position: relative; flex: 1; overflow: hidden; background: #336494; border-right: 1px solid #dde; }
.drawing { position: absolute; inset: 0; width: 100%; height: 100%; }
.dimtext { font: 13px "Open Sans", sans-serif; fill: #2f3a38; stroke: #2f3a38; stroke-width: .3px; }
.axis { font: 12px "DejaVu Sans", sans-serif; }
.axis.z { fill: #1a1af0; }
.axis.y { fill: #5cf04a; }
.axis.x { fill: #d81e2c; }
.mdi { position: absolute; top: 6px; right: 0; display: flex; gap: 6px; }
.mdi svg { width: 14px; height: 14px; }
.cube {
  position: absolute;
  top: 60px;
  right: 35px;
  width: 54px;
  height: 54px;
  padding: 9px;
  border: 1px solid #66747f;
  background: #8ca4c0;
  box-shadow: 0 1px 6px #234b7699;
}
.cube span { display: grid; place-items: center; width: 34px; height: 34px; background: #819db9; color: #5b7593; font-weight: bold; writing-mode: vertical-rl; font-size: 13px; }
.navbar {
  position: absolute;
  top: 146px;
  right: 1px;
  width: 35px;
  height: 232px;
  padding: 1px;
  display: flex;
  flex-direction: column;
  align-items: center;
  gap: 7px;
  border: 2px solid #2b4f80;
  border-radius: 5px;
  background: #6d8fb3;
  color: #465e7c;
}
.navbar hr { width: 26px; margin: 0; border: 0; border-top: 1px solid #465e7c; }
.navbar button + .caret { margin-top: 1px; }
.nav-x { align-self: flex-end; padding-right: 1px; }
.nav-x.last { margin-top: auto; }
.nav-wheel { padding-top: 4px; }
.nav-wheel svg { width: 22px; height: 22px; }

/* Document tabs */
.doctabs { display: flex; height: 23px; padding-top: 2px; border-top: 1px solid #f0f0f0; background: linear-gradient(#dcdcdc, #b0b0b0); border-bottom: 1px solid #fff; }
.arr { width: 20px; display: grid; place-items: center; border: 1px solid #333; background: #d6d6d6; }
.arr:first-child { margin-left: -1px; }
.up { align-items: start; padding-top: 3px; }
.up svg { width: 10px; height: 6px; }
.doc { height: 18px; padding: 0 8px; background: linear-gradient(#d8d8d8, #bdbdbd); border: 1px solid #555; border-top: 0; border-radius: 0 0 6px 6px; }
.doc.on { display: flex; align-items: center; gap: 5px; padding: 0 7px; background: #fff; }
.doc.on svg { margin-bottom: 4px; }

/* Status bar */
.status { display: flex; align-items: stretch; height: 25px; line-height: 25px; color: #111; white-space: nowrap; background: linear-gradient(#f6f6f6, #adadad); border-bottom: 1px solid #222; }
.ready { width: 448px; border-right: 1px solid #aaa; }
.modes { display: flex; align-items: center; flex: 1; padding-left: 3px; }
.modes button { width: 24px; height: 22px; display: grid; place-items: center; }
.modes .caret { margin-right: 6px; }
.cell { padding-left: 4px; border-left: 1px solid #bbb; }
.c-xy { width: 118px; font-size: 11px; }
.c-full { width: 100px; }
.c-n { width: 38px; padding-left: 6px; }

/* Windows taskbar */
.taskbar { position: relative; display: flex; align-items: center; height: 40px; padding-bottom: 2px; overflow: hidden; background: linear-gradient(#2d4663, #142c4c 10%, #14294a); border-top: 1px solid #6a7c90; color: #fff; }
.taskbar > * { position: relative; }
.taskbar .glow { position: absolute; inset: 0; width: 100%; height: 100%; }
.start { width: 52px; padding-left: 7px; }
.start svg { width: 38px; height: 38px; }
.dots { width: 8px; height: 30px; margin-left: 5px; background: radial-gradient(circle, #7c90a8 1px, transparent 1px) 0 0 / 3px 3px; }
.pin { width: 62px; display: grid; place-items: center; }
.dots + .pin { margin-left: 8px; }
.pin svg, .task svg { width: 32px; height: 32px; }
.task { width: 58px; height: 38px; margin-right: 4px; display: grid; place-items: center; border: 1px solid #a9b6c6; border-radius: 2px; background: linear-gradient(135deg, #66799a, #2c4266 60%, #3d5578); }
.pin + .task { margin-left: 2px; }
.task.on { background: linear-gradient(135deg, #d5dbe3, #8592a8 60%, #a9b4c4); }
.task.on span { position: absolute; right: 14px; bottom: 3px; font-size: 6px; line-height: 7px; font-weight: bold; color: #333; }
.tray { display: flex; align-items: center; margin-left: auto; height: 100%; }
.tray button { width: 24px; display: grid; place-items: center; }
.lang { width: 18px; margin-left: 10px; padding-bottom: 6px; }
.tray .t-up { width: 27px; }
.t-up svg { width: 8px; height: 4px; }
.clock { width: 82px; margin-left: 2px; text-align: center; font-size: 11px; line-height: 16px; }
.tray .peek { width: 13px; height: 38px; border: 1px solid #7f93a8; background: linear-gradient(#5d7896, #1c3556 60%); }
```
